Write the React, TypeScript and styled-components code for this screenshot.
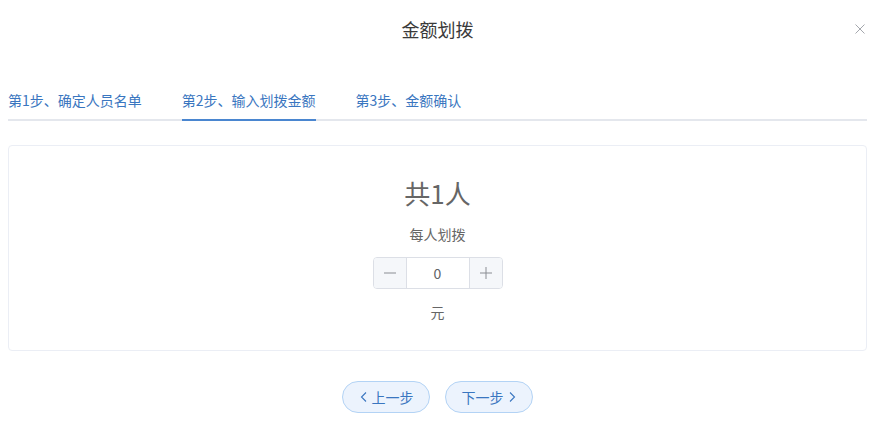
import React, { FC, useState } from 'react';
import styled, { createGlobalStyle } from 'styled-components';

const GlobalStyle = createGlobalStyle`
  html, body {
    margin: 0;
    padding: 0;
    background: #fff;
    font-family: "Noto Sans CJK SC", "Noto Sans", sans-serif;
  }
`;

const steps = ['第1步、确定人员名单', '第2步、输入划拨金额', '第3步、金额确认'];

const ChevronLeft: FC = () => (
  <svg width="10" height="12" viewBox="0 0 10 12" fill="none">
    <path d="M7 1.5L2.5 6L7 10.5" stroke="currentColor" strokeWidth="1.1" />
  </svg>
);

const ChevronRight: FC = () => (
  <svg width="10" height="12" viewBox="0 0 10 12" fill="none">
    <path d="M3 1.5L7.5 6L3 10.5" stroke="currentColor" strokeWidth="1.1" />
  </svg>
);

export default function App() {
  const [active] = useState(1);
  const [amount, setAmount] = useState(0);

  return (
    <>
      <GlobalStyle />
      <Dialog>
        <Header>
          <span />
          <Title>金额划拨</Title>
          <Close aria-label="关闭">
            <svg width="10" height="10" viewBox="0 0 10 10">
              <path d="M0.5 0.5L9.5 9.5M9.5 0.5L0.5 9.5" stroke="currentColor" strokeWidth="1" />
            </svg>
          </Close>
        </Header>
        <Tabs>
          {steps.map((s, i) => (
            <Tab key={s} active={i === active}>
              {s}
            </Tab>
          ))}
        </Tabs>
        <Card>
          <Total>共1人</Total>
          <Label>每人划拨</Label>
          <NumberInput>
            <Step onClick={() => setAmount(Math.max(0, amount - 1))}>
              <svg width="12" height="12" viewBox="0 0 12 12">
                <path d="M0 6H12" stroke="currentColor" strokeWidth="1" />
              </svg>
            </Step>
            <Value>{amount}</Value>
            <Step side="right" onClick={() => setAmount(amount + 1)}>
              <svg width="12" height="12" viewBox="0 0 12 12">
                <path d="M0 6H12M6 0V12" stroke="currentColor" strokeWidth="1" />
              </svg>
            </Step>
          </NumberInput>
          <Label>元</Label>
        </Card>
        <Actions>
          <RoundButton>
            <ChevronLeft />
            上一步
          </RoundButton>
          <RoundButton>
            下一步
            <ChevronRight />
          </RoundButton>
        </Actions>
      </Dialog>
    </>
  );
}

const Dialog = styled.div`
  padding: 0 12px 20px 8px;
`;

const Header = styled.div`
  display: grid;
  grid-template-columns: 1fr auto 1fr;
  align-items: center;
  height: 58px;
`;

const Title = styled.div`
  font-size: 18px;
  color: #3a3a3a;
  line-height: 24px;
`;

const Close = styled.div`
  justify-self: end;
  display: flex;
  color: #a4a7ad;
  padding-right: 2px;
  margin-top: -1px;
  cursor: pointer;
`;

const Tabs = styled.div`
  display: flex;
  margin-top: 21px;
  height: 40px;
  border-bottom: 2px solid #e4e7ed;
`;

const Tab = styled.div<{ active?: boolean }>`
  height: 40px;
  line-height: 42px;
  margin: 0 20px -2px;
  font-size: 14px;
  color: #3a76c0;
  border-bottom: 2px solid ${({ active }) => (active ? '#4a86d0' : 'transparent')};
  cursor: pointer;

  &:first-child {
    margin-left: 0;
  }
`;

const Card = styled.div`
  margin-top: 24px;
  border: 1px solid #ebeef5;
  border-radius: 4px;
  padding: 29px 0 28px;
  display: flex;
  flex-direction: column;
  align-items: center;
  gap: 13px;
`;

const Total = styled.div`
  font-size: 26px;
  line-height: 36px;
  color: #666;
`;

const Label = styled.div`
  font-size: 14px;
  line-height: 20px;
  color: #666;
`;

const NumberInput = styled.div`
  display: flex;
  width: 130px;
  height: 32px;
  box-sizing: border-box;
  border: 1px solid #dcdfe6;
  border-radius: 4px;
  overflow: hidden;
`;

const Step = styled.div<{ side?: 'right' }>`
  width: 32px;
  display: flex;
  align-items: center;
  justify-content: center;
  background: #f5f7fa;
  color: #8a8d93;
  cursor: pointer;
  ${({ side }) => (side === 'right' ? 'border-left: 1px solid #dcdfe6;' : 'border-right: 1px solid #dcdfe6;')}
`;

const Value = styled.div`
  flex: 1;
  display: flex;
  align-items: center;
  justify-content: center;
  font-size: 14px;
  color: #606266;
`;

const Actions = styled.div`
  display: flex;
  justify-content: center;
  gap: 15px;
  margin-top: 30px;
`;

const RoundButton = styled.button`
  width: 88px;
  height: 32px;
  box-sizing: border-box;
  border-radius: 16px;
  border: 1px solid #b3d3f5;
  background: #ecf3fd;
  color: #3a76c0;
  font-family: inherit;
  font-size: 14px;
  display: flex;
  align-items: center;
  justify-content: center;
  gap: 3px;
  padding: 0;
  cursor: pointer;
`;
